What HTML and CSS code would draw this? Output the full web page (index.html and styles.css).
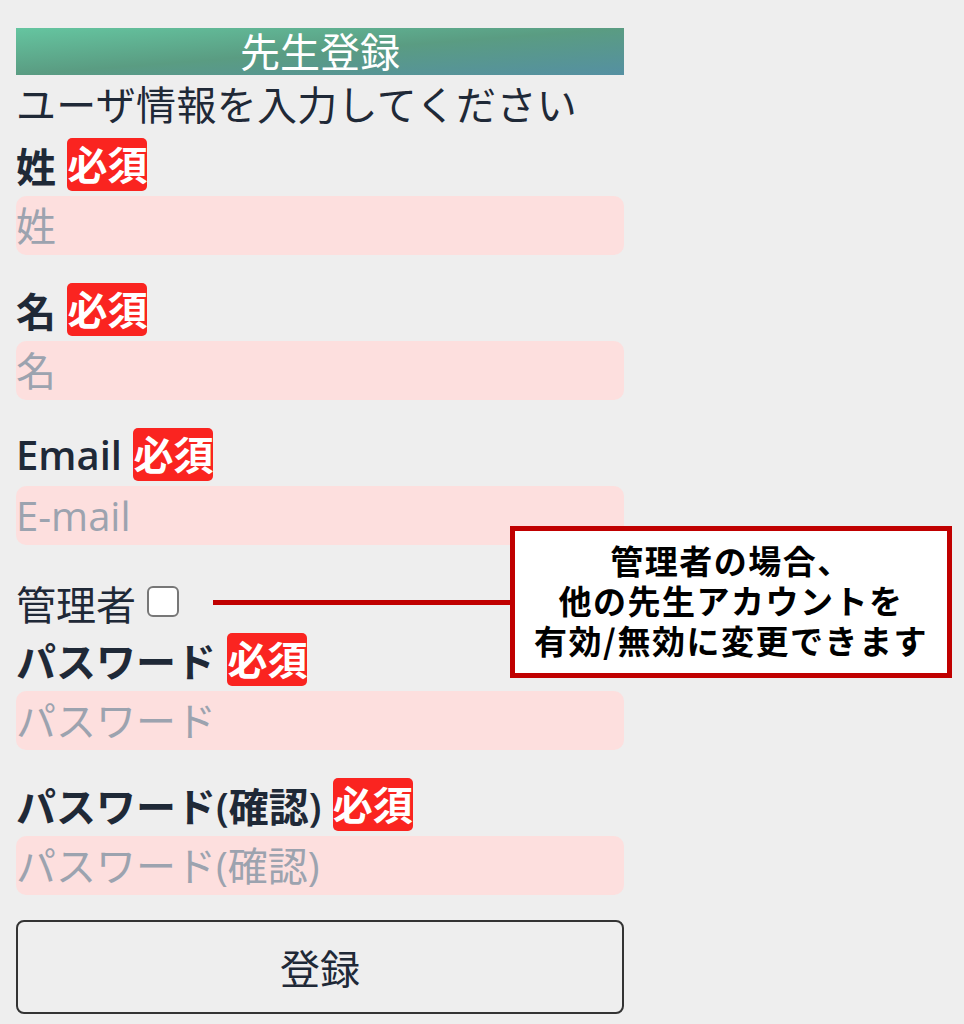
FILE: index.html
```html
<!DOCTYPE html>
<html lang="ja">
<head>
  <meta charset="UTF-8">
  <meta name="viewport" content="width=device-width, initial-scale=1.0">
  <title>先生登録</title>
  <link rel="stylesheet" href="styles.css">
</head>
<body>

  <div class="page">
    <form class="form">
      <h1 class="title">先生登録</h1>
      <p class="lead">ユーザ情報を入力してください</p>

      <div class="field">
        <label class="label">姓 <span class="required">必須</span></label>
        <input type="text" class="input" placeholder="姓">
      </div>

      <div class="field">
        <label class="label">名 <span class="required">必須</span></label>
        <input type="text" class="input" placeholder="名">
      </div>

      <div class="field">
        <label class="label">Email <span class="required">必須</span></label>
        <input type="email" class="input" placeholder="E-mail">
      </div>

      <div class="admin">
        <label class="admin-label">管理者</label>
        <span class="checkbox"></span>
      </div>

      <div class="field">
        <label class="label">パスワード <span class="required">必須</span></label>
        <input type="password" class="input" placeholder="パスワード">
      </div>

      <div class="field">
        <label class="label">パスワード(確認) <span class="required">必須</span></label>
        <input type="password" class="input" placeholder="パスワード(確認)">
      </div>

      <button type="button" class="submit">登録</button>
    </form>

    <!-- annotation -->
    <div class="connector"></div>
    <div class="callout">
      管理者の場合、<br>
      他の先生アカウントを<br>
      有効/無効に変更できます
    </div>
  </div>

</body>
</html>
```

FILE: styles.css
```css
body {
  margin: 0;
  background: #eeeeee;
  font-family: "Open Sans", "Noto Sans CJK JP", sans-serif;
  color: #1f2937;
}

.page {
  position: relative;
  padding: 28px 16px 0;
}

.form {
  width: 608px;
}

.title {
  margin: 0;
  height: 47px;
  line-height: 47px;
  font-size: 40px;
  font-weight: normal;
  text-align: center;
  color: #fff;
  background: linear-gradient(to bottom right, #65c5a0, #5a9c82, #5590a2);
}

.lead {
  margin: 0 0 3px;
  font-size: 40px;
  line-height: 60px;
  letter-spacing: 0.3px;
}

.field {
  margin-bottom: 28px;
}

.label {
  display: flex;
  align-items: center;
  height: 53px;
  font-size: 40px;
  font-weight: 600;
  white-space: pre;
}

.required {
  display: inline-block;
  height: 53px;
  line-height: 53px;
  margin-left: 1px;
  font-size: 40px;
  font-weight: bold;
  color: #fff;
  background: #fa2420;
  border-radius: 5px;
}

.input {
  display: block;
  box-sizing: border-box;
  width: 100%;
  height: 59px;
  margin-top: 5px;
  padding: 0;
  border: none;
  border-radius: 10px;
  background: #fddfde;
  font-family: inherit;
  font-size: 40px;
  color: #1f2937;
}

.input::placeholder {
  color: #9ca3af;
}

.admin {
  display: flex;
  align-items: center;
  height: 60px;
  margin-top: -28px;
  padding-top: 28px;
}

.admin-label {
  font-size: 40px;
  margin-right: 11px;
}

.checkbox {
  display: inline-block;
  box-sizing: border-box;
  width: 32px;
  height: 31px;
  border: 2px solid #777;
  border-radius: 6px;
  background: #fff;
  margin-top: -4px;
}

.submit {
  display: block;
  width: 100%;
  height: 94px;
  margin-top: -3px;
  border: 2px solid #333;
  border-radius: 8px;
  background: transparent;
  font-family: inherit;
  font-size: 40px;
  color: #1f2937;
}

.connector {
  position: absolute;
  left: 213px;
  top: 600px;
  width: 300px;
  height: 5px;
  background: #c00000;
}

.callout {
  position: absolute;
  left: 510px;
  top: 526px;
  width: 432px;
  height: 120px;
  padding: 9px 0 13px;
  border: 5px solid #c00000;
  background: #fff;
  font-family: "Noto Sans CJK JP", sans-serif;
  font-weight: bold;
  font-size: 33px;
  letter-spacing: 1.5px;
  line-height: 40px;
  text-align: center;
  color: #000;
}
```
